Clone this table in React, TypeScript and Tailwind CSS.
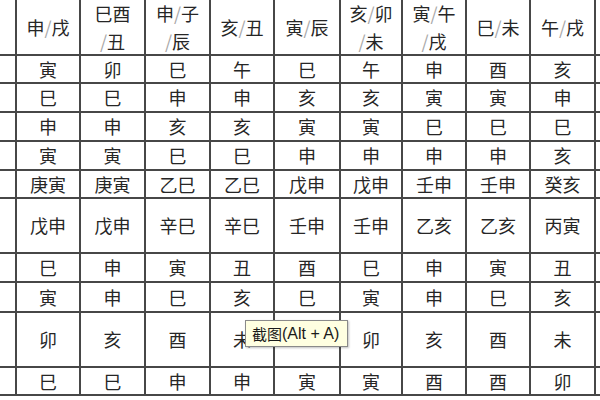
import React from "react";

type Cell = string | string[];

// header labels: each entry is one or two lines, "/" drawn light gray
const header: Cell[] = [
  "",
  ["申/戌"],
  ["巳酉", "/丑"],
  ["申/子", "/辰"],
  ["亥/丑"],
  ["寅/辰"],
  ["亥/卯", "/未"],
  ["寅/午", "/戌"],
  ["巳/未"],
  ["午/戌"],
  ""
];

// the cell under the tooltip is left blank, it is not visible anyway
const rows: string[][] = [
  ["寅", "卯", "巳", "午", "巳", "午", "申", "酉", "亥"],
  ["巳", "巳", "申", "申", "亥", "亥", "寅", "寅", "申"],
  ["申", "申", "亥", "亥", "寅", "寅", "巳", "巳", "巳"],
  ["寅", "寅", "巳", "巳", "申", "申", "申", "申", "亥"],
  ["庚寅", "庚寅", "乙巳", "乙巳", "戊申", "戊申", "壬申", "壬申", "癸亥"],
  ["戊申", "戊申", "辛巳", "辛巳", "壬申", "壬申", "乙亥", "乙亥", "丙寅"],
  ["巳", "申", "寅", "丑", "酉", "巳", "申", "寅", "丑"],
  ["寅", "申", "巳", "亥", "巳", "寅", "申", "巳", "亥"],
  ["卯", "亥", "酉", "未", "", "卯", "亥", "酉", "未"],
  ["巳", "巳", "申", "申", "寅", "寅", "酉", "酉", "卯"]
];

const Label = ({ text }: { text: string }) => (
  <span>
    {text.split("/").map((part, i) => (
      <React.Fragment key={i}>
        {i > 0 && <span className="text-[#a8a8a8]">/</span>}
        {part}
      </React.Fragment>
    ))}
  </span>
);

const cellBase = "flex flex-col items-center justify-center border-b-2 border-[#474747]";

const App = () => {
  const renderCell = (content: Cell, col: number, key: string, isHeader = false) => {
    const last = col === 10;
    return (
      <div key={key} className={`${cellBase} ${last ? "" : "border-r-2"} ${isHeader ? "leading-[28px]" : ""}`}>
        {Array.isArray(content)
          ? content.map((line, i) => <Label key={i} text={line} />)
          : content}
      </div>
    );
  };

  return (
    <div className="relative h-[400px] w-[600px] overflow-hidden bg-white font-['Noto_Sans_CJK_SC','Noto_Sans',sans-serif] text-[18px] text-[#262626]">
      <div className="grid grid-cols-[17px_64px_65px_65px_64px_66px_62px_64px_64px_65px_1fr] grid-rows-[56px_28px_29px_29px_29px_28px_55px_29px_30px_55px_28px]">
        {header.map((h, c) => renderCell(h, c, `h-${c}`, true))}
        {rows.map((r, ri) =>
          ["", ...r, ""].map((v, c) => renderCell(v, c, `r${ri}-${c}`))
        )}
      </div>

      <div className="absolute left-[245px] top-[320px] flex h-[27px] w-[103px] items-center border border-[#8a8a8a] bg-[#ffffe1] pl-[6px] leading-none text-[#1a1a1a] shadow-[1px_1px_2px_rgba(0,0,0,0.25)]">
        <span className="font-['Noto_Sans_CJK_SC',sans-serif] text-[15px]">截图</span>
        <span className="font-['Liberation_Sans',Arial,sans-serif] text-[16px]">(Alt + A)</span>
      </div>
    </div>
  );
};

export default App;
